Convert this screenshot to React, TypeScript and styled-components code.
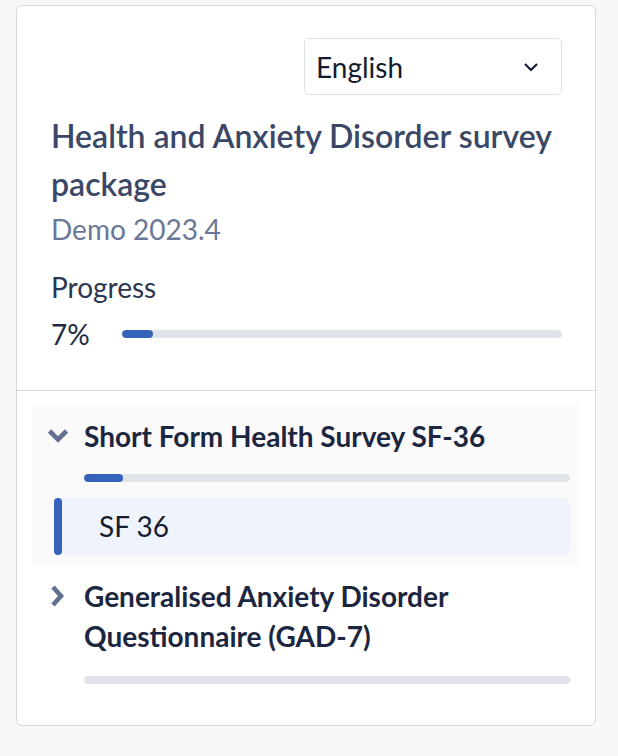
import styled, { createGlobalStyle } from "styled-components";

const GlobalStyle = createGlobalStyle`
  html, body {
    margin: 0;
    padding: 0;
    background: #f7f8fa;
    font-family: Lato, "Noto Sans", sans-serif;
  }
  * { box-sizing: border-box; }
`;

const Page = styled.div`
  padding: 5px 22px 30px 16px;
`;

const Card = styled.div`
  background: #ffffff;
  border: 1.5px solid #d3d8e2;
  border-radius: 6px;
  overflow: hidden;
`;

const Header = styled.div`
  padding: 32px 33px 40px 34px;
  border-bottom: 1.5px solid #d3d8e2;
`;

const SelectRow = styled.div`
  display: flex;
  justify-content: flex-end;
  margin-bottom: 17px;
`;

const Select = styled.div`
  width: 258px;
  height: 57px;
  border: 1.5px solid #dde1e8;
  border-radius: 5px;
  display: flex;
  align-items: center;
  justify-content: space-between;
  padding: 0 22px 0 11px;
  font-size: 28px;
  color: #141c30;
`;

const Title = styled.h1`
  margin: 0;
  font-size: 32px;
  line-height: 48px;
  font-weight: 600;
  color: #3a4766;
`;

const Subtitle = styled.div`
  font-size: 28px;
  line-height: 36px;
  color: #6b7796;
  margin-top: 3px;
`;

const Label = styled.div`
  font-size: 28px;
  line-height: 36px;
  color: #2b3650;
  margin-top: 22px;
`;

const ProgressRow = styled.div`
  display: flex;
  align-items: center;
  gap: 32px;
  margin-top: 13px;
  font-size: 28px;
  color: #1e2a44;
  line-height: 32px;
`;

const Track = styled.div`
  flex: 1;
  height: 8px;
  border-radius: 4px;
  background: #e0e3ea;
  overflow: hidden;
`;

const Fill = styled.div`
  height: 100%;
  border-radius: 4px;
  background: #3563b9;
`;

const List = styled.div`
  padding: 14.5px 15px 31px 15px;
`;

const Section = styled.div<{ $open?: boolean }>`
  background: ${p => (p.$open ? "#fafafa" : "transparent")};
  padding: ${p => (p.$open ? "10px" : "11px")} 10px 10px 16px;
`;

const SectionHead = styled.div`
  display: flex;
  align-items: flex-start;
  gap: 16px;
`;

const Chevron = styled.div`
  width: 20px;
  height: 40px;
  flex: none;
  display: flex;
  align-items: center;
  justify-content: center;
  color: #64708f;
  svg { flex: none; }
`;

const SectionBody = styled.div`
  flex: 1;
  min-width: 0;
`;

const SectionTitle = styled.div`
  font-size: 28px;
  line-height: 40px;
  font-weight: 700;
  color: #1c2640;
`;

const BarWrap = styled.div<{ $mt: number }>`
  margin-top: ${p => p.$mt}px;
  display: flex;
`;

const Item = styled.div`
  margin: 16px 0 0 6px;
  height: 57px;
  display: flex;
  align-items: center;
  background: #eff3fb;
  border-radius: 6px;
  position: relative;
  padding-left: 45px;
  font-size: 28px;
  color: #141c30;
  &::before {
    content: "";
    position: absolute;
    left: 0;
    top: 0;
    bottom: 0;
    width: 8px;
    border-radius: 4px;
    background: #3563b9;
  }
`;

function ChevronIcon({ dir }: { dir: "down" | "right" }) {
  return (
    <svg width="22" height="22" viewBox="0 0 22 22" fill="none">
      <path
        d={dir === "down" ? "M2.5 6 L11 14.5 L19.5 6" : "M6 2 L14 11 L6 20"}
        stroke="currentColor"
        strokeWidth="4.6"
        strokeLinecap="butt"
        strokeLinejoin="miter"
      />
    </svg>
  );
}

const surveys = [
  {
    title: "Short Form Health Survey SF-36",
    progress: 8,
    open: true,
    items: ["SF 36"],
  },
  {
    title: "Generalised Anxiety Disorder Questionnaire (GAD-7)",
    progress: 0,
    open: false,
    items: [],
  },
];

export default function App() {
  return (
    <>
      <GlobalStyle />
      <Page>
        <Card>
          <Header>
            <SelectRow>
              <Select>
                <span>English</span>
                <svg width="16" height="10" viewBox="0 0 16 10" fill="none">
                  <path d="M2 2 L8 8 L14 2" stroke="#141c30" strokeWidth="2.2" />
                </svg>
              </Select>
            </SelectRow>
            <Title>Health and Anxiety Disorder survey package</Title>
            <Subtitle>Demo 2023.4</Subtitle>
            <Label>Progress</Label>
            <ProgressRow>
              <span>7%</span>
              <Track>
                <Fill style={{ width: "7%" }} />
              </Track>
            </ProgressRow>
          </Header>
          <List>
            {surveys.map(s => (
              <Section key={s.title} $open={s.open}>
                <SectionHead>
                  <Chevron>
                    <ChevronIcon dir={s.open ? "down" : "right"} />
                  </Chevron>
                  <SectionBody>
                    <SectionTitle>{s.title}</SectionTitle>
                    <BarWrap $mt={s.open ? 18 : 20}>
                      <Track>
                        <Fill style={{ width: `${s.progress}%` }} />
                      </Track>
                    </BarWrap>
                  </SectionBody>
                </SectionHead>
                {s.items.map(it => (
                  <Item key={it}>{it}</Item>
                ))}
              </Section>
            ))}
          </List>
        </Card>
      </Page>
    </>
  );
}
